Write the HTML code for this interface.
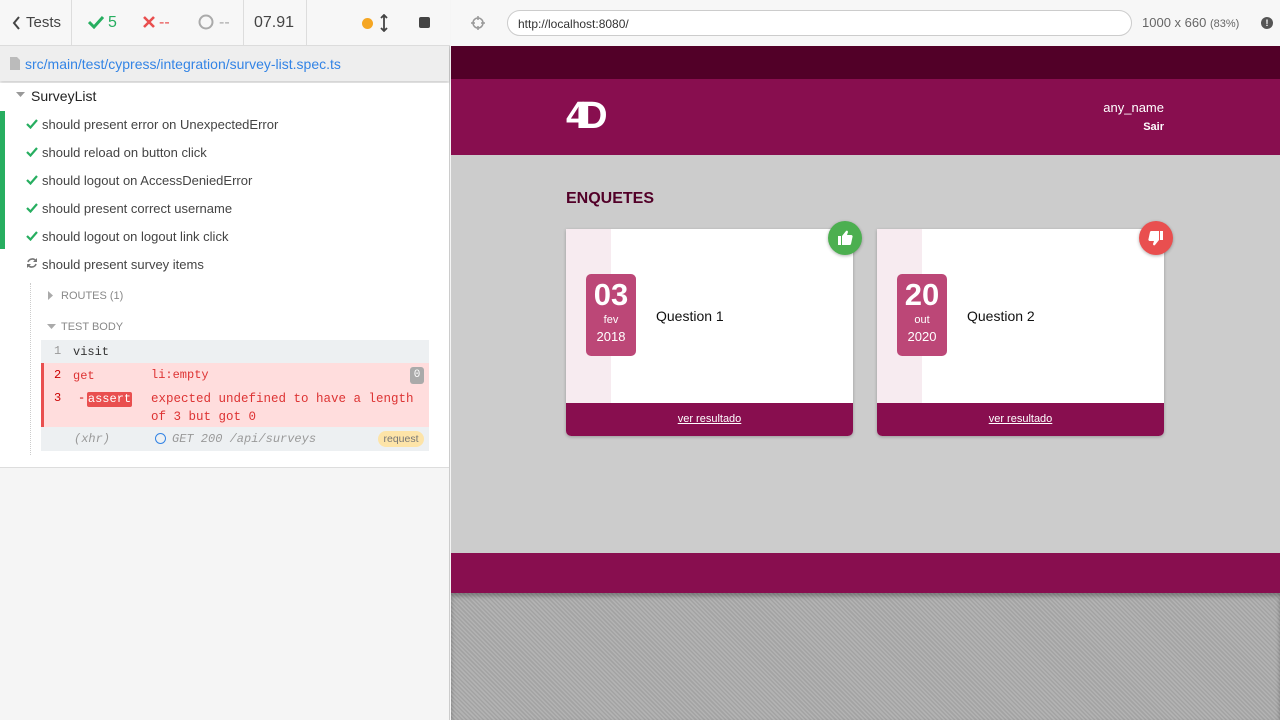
<!DOCTYPE html>
<html><head><meta charset="utf-8"><style>
*{box-sizing:border-box;margin:0;padding:0}
body{width:1280px;height:720px;overflow:hidden;font-family:"Liberation Sans",sans-serif;position:relative;background:#f5f5f5}
.abs{position:absolute}
.mono{font-family:"Liberation Mono",monospace}
.test{position:absolute;left:26px;font-size:13px;color:#444}
.test svg{position:absolute;left:0;top:2px}
.test span{position:absolute;left:16px;white-space:nowrap}
</style></head><body>
<!-- left panel -->
<div class="abs" style="left:0;top:0;width:450px;height:720px;background:#f5f5f5;border-right:1px solid #ccc"></div>
<div class="abs" style="left:0;top:0;width:450px;height:46px;background:#f7f7f7;border-bottom:1px solid #ddd"></div>
<div class="abs" style="left:71px;top:0;width:1px;height:46px;background:#ddd"></div>
<div class="abs" style="left:243px;top:0;width:1px;height:46px;background:#ddd"></div>
<div class="abs" style="left:306px;top:0;width:1px;height:46px;background:#ddd"></div>
<svg class="abs" style="left:12px;top:16px" width="9" height="14"><path d="M7 1 L2 7 L7 13" stroke="#444" stroke-width="2" fill="none"/></svg>
<div class="abs" style="left:26px;top:14px;font-size:15px;color:#444">Tests</div>
<svg class="abs" style="left:88px;top:15px" width="16" height="14"><path d="M1 7 L6 12 L15 2" stroke="#27ae60" stroke-width="3" fill="none"/></svg>
<div class="abs" style="left:108px;top:14px;font-size:16px;color:#27ae60">5</div>
<svg class="abs" style="left:143px;top:16px" width="12" height="12"><path d="M1 1L11 11M11 1L1 11" stroke="#e94f4f" stroke-width="2.6"/></svg>
<div class="abs" style="left:159px;top:14px;font-size:16px;color:#e94f4f">--</div>
<svg class="abs" style="left:198px;top:14px" width="16" height="16"><circle cx="8" cy="8" r="6.5" stroke="#aaa" stroke-width="2" fill="none"/></svg>
<div class="abs" style="left:219px;top:14px;font-size:16px;color:#aaa">--</div>
<div class="abs" style="left:254px;top:14px;font-size:16px;color:#444">07.91</div>
<div class="abs" style="left:362px;top:18px;width:11px;height:11px;border-radius:50%;background:#f5a623"></div>
<svg class="abs" style="left:380px;top:14px" width="8" height="18"><path d="M4 1V17M1 4L4 1L7 4M1 14L4 17L7 14" stroke="#444" stroke-width="1.8" fill="none"/></svg>
<div class="abs" style="left:419px;top:17px;width:11px;height:11px;border-radius:2px;background:#444"></div>
<div class="abs" style="left:0;top:46px;width:449px;height:35px;background:#eee;box-shadow:0 2px 3px rgba(0,0,0,.15)"></div>
<svg class="abs" style="left:10px;top:57px" width="10" height="13"><path d="M0 0H7L10 3V13H0Z" fill="#bbb"/></svg>
<div class="abs" style="left:25px;top:56px;font-size:14px;color:#3384e5">src/main/test/cypress/integration/survey-list.spec.ts</div>
<div class="abs" style="left:0;top:83px;width:449px;height:385px;background:#fff;border-bottom:1px solid #ddd"></div>
<svg class="abs" style="left:16px;top:92px" width="9" height="6"><path d="M0 0H9L4.5 5Z" fill="#999"/></svg>
<div class="abs" style="left:31px;top:88px;font-size:14px;color:#222">SurveyList</div>
<div class="abs" style="left:0;top:111px;width:5px;height:138px;background:#27ae60"></div>
<div class="test" style="top:117px"><svg width="12" height="10"><path d="M1 5L4.5 8.5L11 1" stroke="#27ae60" stroke-width="2.2" fill="none"/></svg><span>should present error on UnexpectedError</span></div>
<div class="test" style="top:145px"><svg width="12" height="10"><path d="M1 5L4.5 8.5L11 1" stroke="#27ae60" stroke-width="2.2" fill="none"/></svg><span>should reload on button click</span></div>
<div class="test" style="top:173px"><svg width="12" height="10"><path d="M1 5L4.5 8.5L11 1" stroke="#27ae60" stroke-width="2.2" fill="none"/></svg><span>should logout on AccessDeniedError</span></div>
<div class="test" style="top:201px"><svg width="12" height="10"><path d="M1 5L4.5 8.5L11 1" stroke="#27ae60" stroke-width="2.2" fill="none"/></svg><span>should present correct username</span></div>
<div class="test" style="top:229px"><svg width="12" height="10"><path d="M1 5L4.5 8.5L11 1" stroke="#27ae60" stroke-width="2.2" fill="none"/></svg><span>should logout on logout link click</span></div>
<div class="test" style="top:257px"><svg width="12" height="12" style="top:0"><path d="M10 4A4.5 4.5 0 0 0 2 5M2 8A4.5 4.5 0 0 0 10 7" stroke="#777" stroke-width="1.6" fill="none"/><path d="M11 1V5H7Z M1 11V7H5Z" fill="#777"/></svg><span>should present survey items</span></div>
<div class="abs" style="left:30px;top:283px;width:0;height:172px;border-left:1px dotted #ccc"></div>
<svg class="abs" style="left:48px;top:291px" width="5" height="9"><path d="M0 0L5 4.5L0 9Z" fill="#aaa"/></svg>
<div class="abs" style="left:61px;top:290px;font-size:11px;color:#888">ROUTES (1)</div>
<svg class="abs" style="left:47px;top:324px" width="9" height="5"><path d="M0 0H9L4.5 5Z" fill="#aaa"/></svg>
<div class="abs" style="left:61px;top:321px;font-size:11px;color:#888">TEST BODY</div>
<div class="abs" style="left:41px;top:340px;width:388px;height:23px;background:#edf0f2"></div>
<div class="abs mono" style="left:54px;top:344px;font-size:12px;color:#999">1</div>
<div class="abs mono" style="left:73px;top:345px;font-size:12px;color:#333">visit</div>
<div class="abs" style="left:41px;top:363px;width:388px;height:64px;background:#fdd;border-left:3px solid #e94f4f"></div>
<div class="abs mono" style="left:54px;top:368px;font-size:12px;color:#c00">2</div>
<div class="abs mono" style="left:73px;top:369px;font-size:12px;color:#d33">get</div>
<div class="abs mono" style="left:151px;top:368px;font-size:12px;color:#d33">li:empty</div>
<div class="abs mono" style="left:410px;top:367px;width:14px;height:17px;border-radius:3px;background:#aaa;color:#fff;font-size:11px;text-align:center;line-height:17px">0</div>
<div class="abs mono" style="left:54px;top:391px;font-size:12px;color:#c00">3</div>
<div class="abs mono" style="left:78px;top:391px;font-size:12px;color:#c00">-</div>
<div class="abs mono" style="left:87px;top:392px;width:45px;height:15px;background:#e94f4f;color:#fff;font-size:12px;line-height:15px;text-align:center;border-radius:2px">assert</div>
<div class="abs mono" style="left:151px;top:390px;font-size:12.5px;color:#d33;line-height:18px;width:270px">expected undefined to have a length of 3 but got 0</div>
<div class="abs" style="left:41px;top:427px;width:388px;height:24px;background:#edf0f2"></div>
<div class="abs mono" style="left:74px;top:432px;font-size:12px;color:#999;font-style:italic">(xhr)</div>
<div class="abs" style="left:155px;top:433px;width:11px;height:11px;border-radius:50%;border:1.5px solid #3384e5"></div>
<div class="abs mono" style="left:172px;top:432px;font-size:12px;color:#999;font-style:italic">GET 200 /api/surveys</div>
<div class="abs" style="left:378px;top:431px;width:46px;height:16px;border-radius:8px;background:#fde4a8;color:#777;font-size:10.5px;text-align:center;line-height:16px">request</div>

<!-- right -->
<div class="abs" style="left:451px;top:0;width:829px;height:46px;background:#f7f7f7"></div>
<svg class="abs" style="left:471px;top:16px" width="14" height="14"><circle cx="7" cy="7" r="5" stroke="#999" stroke-width="1.5" fill="none"/><path d="M7 0V4M7 10V14M0 7H4M10 7H14" stroke="#999" stroke-width="1.5"/></svg>
<div class="abs" style="left:507px;top:10px;width:625px;height:26px;border:1px solid #ccc;border-radius:13px;background:#fff;font-size:12px;color:#333;padding:6px 10px">http://localhost:8080/</div>
<div class="abs" style="left:1142px;top:15px;font-size:13px;color:#666">1000 x 660 <span style="font-size:11px">(83%)</span></div>
<div class="abs" style="left:1261px;top:17px;width:12px;height:12px;border-radius:50%;background:#555;color:#fff;font-size:9px;text-align:center;line-height:12px;font-weight:bold">!</div>
<div class="abs" style="left:451px;top:46px;width:829px;height:33px;background:#520028"></div>
<div class="abs" style="left:451px;top:79px;width:829px;height:76px;background:#880e4f"></div>
<div class="abs" style="left:566px;top:94px;font-size:38px;font-weight:bold;color:#fff;letter-spacing:-7px;line-height:44px">4D</div>
<div class="abs" style="right:116px;top:100px;font-size:13px;color:#fff">any_name</div>
<div class="abs" style="right:116px;top:121px;font-size:11px;color:#fff;font-weight:bold">Sair</div>
<div class="abs" style="left:451px;top:155px;width:829px;height:398px;background:#ccc"></div>
<div class="abs" style="left:566px;top:190px;font-size:16px;font-weight:bold;color:#520028">ENQUETES</div>

<div class="abs" style="left:566px;top:229px;width:287px;height:207px;background:#fff;border-radius:0 0 5px 5px;overflow:hidden;box-shadow:0 1px 3px rgba(0,0,0,.25)">
<div class="abs" style="left:0;top:0;width:45px;height:174px;background:#f7ebf0"></div>
<div class="abs" style="left:20px;top:45px;width:50px;height:82px;background:#bc4777;border-radius:5px;color:#fff;text-align:center">
<div style="font-size:31px;font-weight:bold;line-height:36px;margin-top:3px">03</div><div style="font-size:11px;line-height:14px">fev</div><div style="font-size:13px;line-height:20px">2018</div></div>
<div class="abs" style="left:90px;top:79px;font-size:14px;color:#111">Question 1</div>
<div class="abs" style="left:0;top:174px;width:287px;height:33px;background:#880e4f;color:#fff;font-size:11px;text-align:center;line-height:33px;text-decoration:underline">ver resultado</div>
</div>
<div class="abs" style="left:828px;top:221px;width:34px;height:34px;border-radius:50%;background:#4caf50;box-shadow:0 1px 3px rgba(0,0,0,.3)"><svg width="34" height="34"><path d="M10 15H13V24H10Z M14 15L18 10C19 9 20 10 20 11L19 14H23C24 14 25 15 24.5 16L23 23C22.8 23.6 22.3 24 21.7 24H14Z" fill="#fff"/></svg></div>

<div class="abs" style="left:877px;top:229px;width:287px;height:207px;background:#fff;border-radius:0 0 5px 5px;overflow:hidden;box-shadow:0 1px 3px rgba(0,0,0,.25)">
<div class="abs" style="left:0;top:0;width:45px;height:174px;background:#f7ebf0"></div>
<div class="abs" style="left:20px;top:45px;width:50px;height:82px;background:#bc4777;border-radius:5px;color:#fff;text-align:center">
<div style="font-size:31px;font-weight:bold;line-height:36px;margin-top:3px">20</div><div style="font-size:11px;line-height:14px">out</div><div style="font-size:13px;line-height:20px">2020</div></div>
<div class="abs" style="left:90px;top:79px;font-size:14px;color:#111">Question 2</div>
<div class="abs" style="left:0;top:174px;width:287px;height:33px;background:#880e4f;color:#fff;font-size:11px;text-align:center;line-height:33px;text-decoration:underline">ver resultado</div>
</div>
<div class="abs" style="left:1139px;top:221px;width:34px;height:34px;border-radius:50%;background:#e94f4f;box-shadow:0 1px 3px rgba(0,0,0,.3)"><svg width="34" height="34" style="transform:rotate(180deg)"><path d="M10 15H13V24H10Z M14 15L18 10C19 9 20 10 20 11L19 14H23C24 14 25 15 24.5 16L23 23C22.8 23.6 22.3 24 21.7 24H14Z" fill="#fff"/></svg></div>

<div class="abs" style="left:451px;top:553px;width:829px;height:40px;background:#880e4f"></div>
<div class="abs" style="left:451px;top:593px;width:829px;height:127px;background:repeating-linear-gradient(45deg,#b3b3b3 0 1.5px,#a3a3a3 1.5px 3px);box-shadow:inset 0 3px 4px rgba(0,0,0,.3)"></div>
</body></html>
